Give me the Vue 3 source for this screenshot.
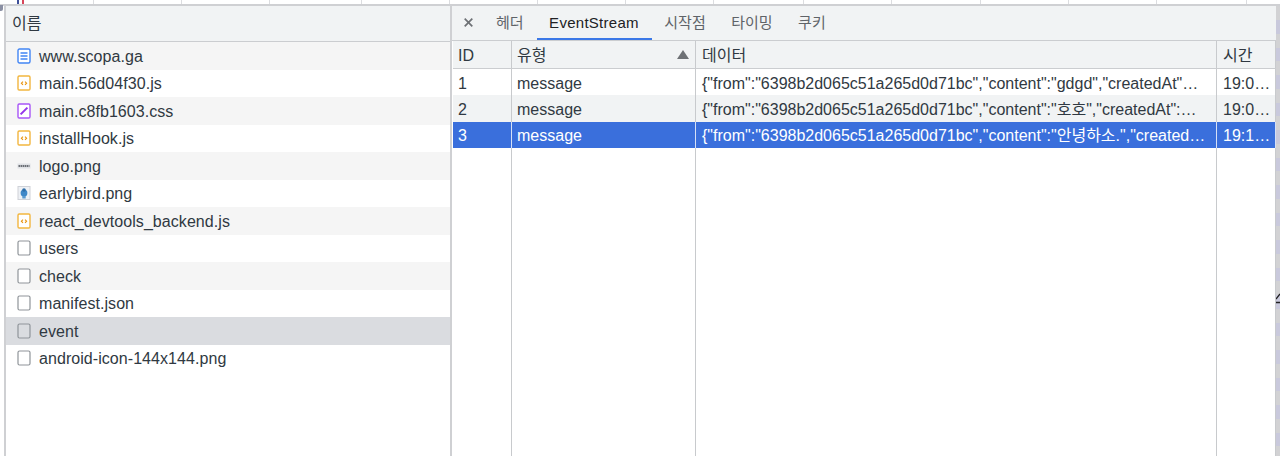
<script setup>
const ticks = [93, 181, 269, 361, 449, 537, 625, 713, 803, 891, 980, 1068, 1156, 1246]
const tickWidths = ticks.map((t, i) => (i + 1 < ticks.length ? ticks[i + 1] - t : 1280 - t))

const files = [
  { name: 'www.scopa.ga', icon: 'doc' },
  { name: 'main.56d04f30.js', icon: 'js' },
  { name: 'main.c8fb1603.css', icon: 'css' },
  { name: 'installHook.js', icon: 'js' },
  { name: 'logo.png', icon: 'logo' },
  { name: 'earlybird.png', icon: 'bird' },
  { name: 'react_devtools_backend.js', icon: 'js' },
  { name: 'users', icon: 'blank' },
  { name: 'check', icon: 'blank' },
  { name: 'manifest.json', icon: 'blank' },
  { name: 'event', icon: 'blank', selected: true },
  { name: 'android-icon-144x144.png', icon: 'blank' },
]
const tabs = ['헤더', 'EventStream', '시작점', '타이밍', '쿠키']
const messages = [
  { id: 1, type: 'message', data: '{"from":"6398b2d065c51a265d0d71bc","content":"gdgd","createdAt"…', time: '19:0…' },
  { id: 2, type: 'message', data: '{"from":"6398b2d065c51a265d0d71bc","content":"호호","createdAt":…', time: '19:0…' },
  { id: 3, type: 'message', data: '{"from":"6398b2d065c51a265d0d71bc","content":"안녕하소.","created…', time: '19:1…', selected: true },
]
</script>

<template>
  <div class="page">
    <div class="ruler">
      <span class="ruler-lead"><i class="flag"></i></span>
      <span v-for="(w, i) in tickWidths" :key="i" class="tick" :style="{ width: w + 'px' }"></span>
    </div>
    <i class="corner"></i>
    <div class="panels">
      <section class="left">
        <div class="left-head">이름</div>
        <div
          v-for="(f, i) in files"
          :key="f.name"
          class="file"
          :class="{ alt: i % 2 === 0, sel: f.selected }"
        >
          <svg class="ficon" width="14" height="16" viewBox="0 0 14 16">
            <template v-if="f.icon === 'doc'">
              <rect x="1" y="1" width="12" height="14" rx="1.5" fill="#fff" stroke="#4285f4" stroke-width="1.4" />
              <path d="M3.5 5h7M3.5 8h7M3.5 11h7" stroke="#4285f4" stroke-width="1.3" />
            </template>
            <template v-else-if="f.icon === 'js'">
              <rect x="1" y="1" width="12" height="14" rx="1.2" fill="#fff" stroke="#f2b63f" stroke-width="1.4" />
              <path d="M6 6.6 4.4 8.2 6 9.8M8 6.6 9.6 8.2 8 9.8" fill="none" stroke="#e8930c" stroke-width="1.1" />
            </template>
            <template v-else-if="f.icon === 'css'">
              <rect x="1" y="1" width="12" height="14" rx="1.2" fill="#fff" stroke="#a855f7" stroke-width="1.4" />
              <path d="M3.6 11.4 10.4 4.6" stroke="#9333ea" stroke-width="2" />
            </template>
            <template v-else-if="f.icon === 'logo'">
              <rect x="0.5" y="5.5" width="13" height="5" fill="#dfe1e5" />
              <path d="M1.5 8h11" stroke="#6b6f75" stroke-width="1.8" stroke-dasharray="1.6 .5" />
            </template>
            <template v-else-if="f.icon === 'bird'">
              <rect x="1" y="1.5" width="12" height="13" fill="#eef1f5" stroke="#cfd2d8" />
              <ellipse cx="7" cy="8" rx="3.4" ry="3.6" fill="#3f88c8" />
              <path d="M5.3 11h3.4v2.5H5.3z" fill="#5a9bd0" />
              <circle cx="7" cy="5" r="1.8" fill="#2f6ea8" />
            </template>
            <template v-else>
              <rect x="1" y="1" width="12" height="14" rx="1.5" :fill="f.selected ? 'none' : '#fff'" stroke="#8f9499" stroke-width="1.2" />
            </template>
          </svg>
          <span class="fname">{{ f.name }}</span>
        </div>
      </section>
      <section class="right">
        <div class="tabs">
          <svg class="close" width="9" height="9" viewBox="0 0 9 9">
            <path d="M.7.7l7.6 7.6M8.3.7.7 8.3" stroke="#6e7175" stroke-width="1.7" />
          </svg>
          <span v-for="t in tabs" :key="t" class="tab" :class="{ active: t === 'EventStream' }">{{ t }}</span>
        </div>
        <div class="table">
          <div class="row head">
            <div class="c c-id">ID</div>
            <div class="c c-type">유형<i class="sort"></i></div>
            <div class="c c-data">데이터</div>
            <div class="c c-time">시간</div>
          </div>
          <div v-for="(m, i) in messages" :key="m.id" class="row msg" :class="{ stripe: i === 1, picked: m.selected }">
            <div class="c c-id">{{ m.id }}</div>
            <div class="c c-type">{{ m.type }}</div>
            <div class="c c-data">{{ m.data }}</div>
            <div class="c c-time">{{ m.time }}</div>
          </div>
          <div class="row filler">
            <div class="c c-id"></div>
            <div class="c c-type"></div>
            <div class="c c-data"></div>
            <div class="c c-time"></div>
          </div>
        </div>
      </section>
      <div class="edge">
        <svg class="cursor" width="4" height="11" viewBox="0 0 4 11">
          <path d="M0 6 4 1M0 9.5h4" stroke="#222" stroke-width="1.4" fill="none" />
        </svg>
      </div>
    </div>
  </div>
</template>

<style>
html, body { margin: 0; background: #fff; overflow: hidden; }
</style>

<style scoped>
.page {
  width: 1280px;
  height: 456px;
  position: relative;
  display: flex;
  flex-direction: column;
  overflow: hidden;
  background: #fff;
  font-family: "Liberation Sans", "Noto Sans CJK KR", sans-serif;
  font-size: 16px;
  color: #303942;
}
.ruler {
  height: 4px;
  display: flex;
  flex: none;
  border-bottom: 2px solid #cfd0d3;
  box-sizing: content-box;
}
.ruler-lead { width: 93px; flex: none; display: flex; padding-left: 17px; box-sizing: border-box; }
.flag {
  width: 7px;
  height: 4px;
  background: linear-gradient(90deg, #3d4f9a 0 2px, #fff 2px 5px, #d6455a 5px 7px);
}
.corner {
  position: absolute;
  left: 0;
  top: 5px;
  width: 3px;
  height: 6px;
  background: #8a8fa3;
  border-radius: 0 0 2px 0;
}
.tick { flex: none; border-left: 1px solid #dcdde0; box-sizing: border-box; }
.panels { flex: 1; display: flex; min-height: 0; }
.left {
  flex: none;
  box-sizing: border-box;
  margin-left: 4px;
  width: 448px;
  border-left: 2px solid #cfd0d3;
  border-right: 2px solid #cfd0d3;
}
.left-head {
  height: 35px;
  line-height: 36px;
  padding-left: 6px;
  background: #f1f3f4;
  border-bottom: 1px solid #cbcdd0;
}
.file {
  height: 27.5px;
  display: flex;
  align-items: center;
  padding-left: 11px;
  gap: 8px;
}
.file.alt { background: #f5f5f5; }
.file.sel { background: #dadce0; }
.ficon { flex: none; }
.fname { padding-top: 2px; letter-spacing: .06px; }
.right { flex: none; width: 824px; display: flex; flex-direction: column; }
.edge {
  flex: 1;
  position: relative;
  background: repeating-linear-gradient(180deg, #d2d2d4 0 14px, #c9c9dc 14px 27.5px);
}
.cursor { position: absolute; left: 0; top: 287px; }
.tabs {
  height: 34px;
  flex: none;
  display: flex;
  background: #f1f3f4;
  border-bottom: 1px solid #cbcdd0;
  align-items: stretch;
  padding-left: 12px;
  font-size: 15px;
}
.close { flex: none; align-self: center; margin-right: 10.5px; margin-top: -1px; }
.tab {
  padding: 0 13px 0 12.5px;
  line-height: 34px;
  color: #5f6368;
  box-sizing: border-box;
}
.tab.active {
  color: #202124;
  letter-spacing: .27px;
  box-shadow: inset 0 -2px 0 #3b78e7;
}
.table { flex: 1; display: flex; flex-direction: column; min-height: 0; padding-left: 1px; }
.row { display: flex; }
.head { height: 28px; box-sizing: border-box; background: #f1f3f4; border-bottom: 1px solid #cbcdd0; flex: none; }
.head .c { line-height: 28px; padding-top: 1px; }
.msg { height: 26.4px; flex: none; }
.msg .c { line-height: 28px; padding-top: 1px; }
.stripe { background: #f1f3f4; }
.picked { background: #3a6fdc; color: #fff; }
.picked .c { padding-top: 0; }
.filler { flex: 1; }
.c {
  box-sizing: border-box;
  padding: 0 6px;
  white-space: nowrap;
  overflow: hidden;
  border-right: 1px solid #c8cacd;
  flex: none;
  position: relative;
}
.picked .c { border-right-color: #d6e0f6; }
.c-id { width: 59px; padding-left: 5px; }
.c-type { width: 184px; padding-left: 5px; }
.c-data { width: 521px; }
.c-time { width: 59px; }
.sort {
  position: absolute;
  right: 6px;
  top: 9px;
  border-left: 6px solid transparent;
  border-right: 6px solid transparent;
  border-bottom: 9px solid #6e7175;
}
</style>
